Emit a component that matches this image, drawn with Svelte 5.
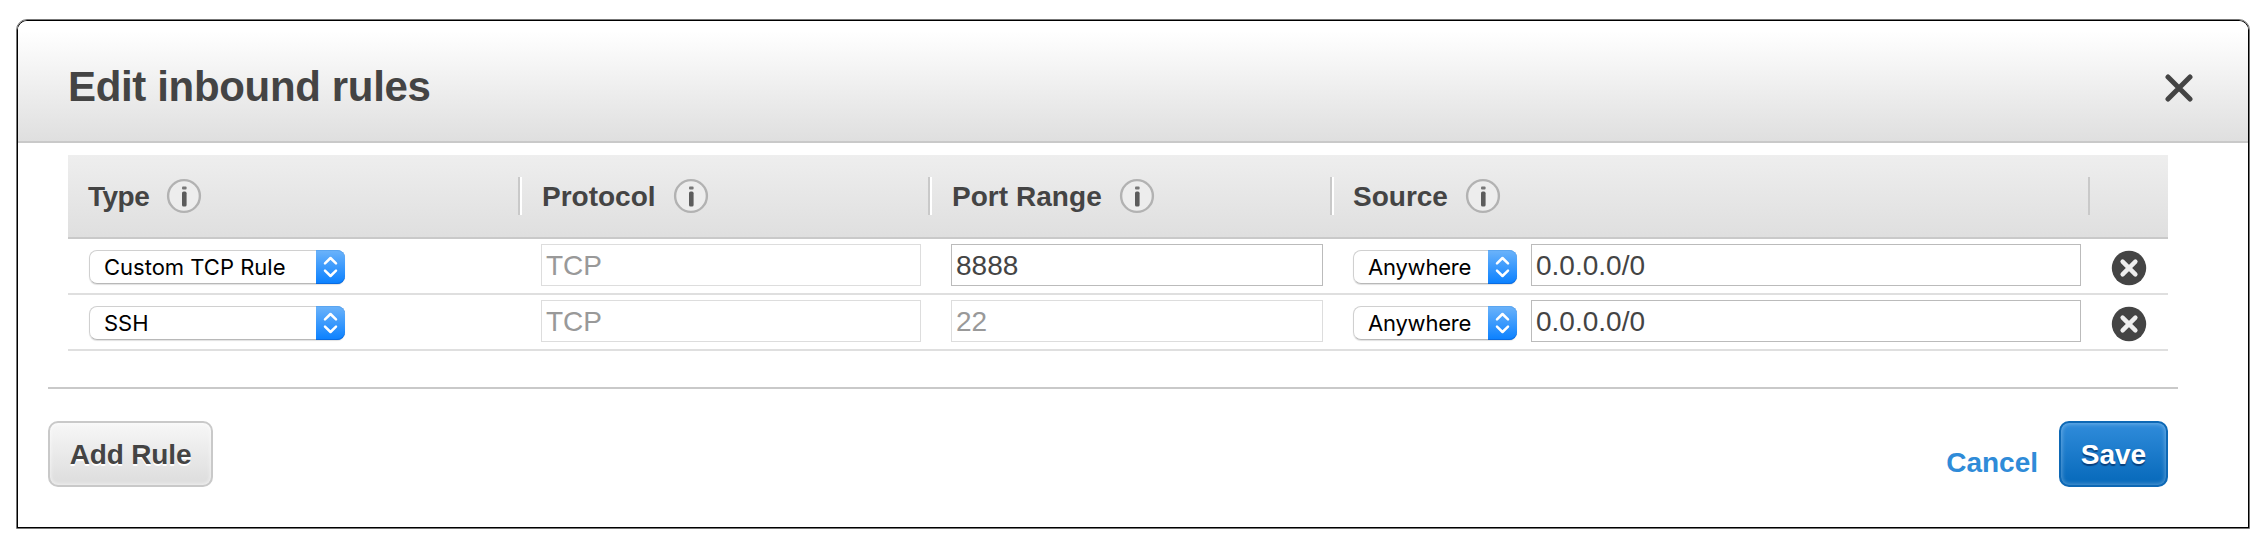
<script>
  const columns = [
    { label: 'Type', spacing: -0.5 },
    { label: 'Protocol', spacing: 0 },
    { label: 'Port Range', spacing: 0.04 },
    { label: 'Source', spacing: 0 }
  ];
  const rules = [
    { type: 'Custom TCP Rule', protocol: 'TCP', port: '8888', portLocked: false, source: 'Anywhere', cidr: '0.0.0.0/0' },
    { type: 'SSH', protocol: 'TCP', port: '22', portLocked: true, source: 'Anywhere', cidr: '0.0.0.0/0' }
  ];
</script>

{#snippet select(value)}
  <div class="select">
    <span class="value">{value}</span>
    <span class="stepper">
      <svg width="29" height="34" viewBox="0 0 29 34">
        <path d="M9 13.4 L14.5 8 L20 13.4 M9 20.6 L14.5 26 L20 20.6" fill="none" stroke="#fff" stroke-width="2.5" stroke-linecap="round" stroke-linejoin="round" />
      </svg>
    </span>
  </div>
{/snippet}

<div class="dialog">
  <header>
    <h1>Edit inbound rules</h1>
    <svg class="close" width="28" height="28" viewBox="0 0 28 28">
      <path d="M3 3 L25 25 M25 3 L3 25" stroke="#444" stroke-width="5" stroke-linecap="round" />
    </svg>
  </header>

  <section class="table">
    <div class="grid head">
      {#each columns as column}
        <div class="th">
          <span class="label" style="letter-spacing: {column.spacing}px">{column.label}</span>
          <svg width="36" height="36" viewBox="0 0 36 36">
            <circle cx="18" cy="18" r="15.9" fill="#ededed" stroke="#b2b2b2" stroke-width="2.4" />
            <rect x="16" y="8.4" width="4.6" height="3.2" rx="1" fill="#777" />
            <rect x="16" y="13.6" width="4.6" height="15" rx="1.6" fill="#5c5c5c" />
          </svg>
        </div>
      {/each}
      <div class="th last"></div>
    </div>

    {#each rules as rule}
      <div class="grid row">
        <div class="td type">{@render select(rule.type)}</div>
        <div class="td"><div class="field locked">{rule.protocol}</div></div>
        <div class="td"><div class="field" class:locked={rule.portLocked}>{rule.port}</div></div>
        <div class="td source">
          {@render select(rule.source)}
          <div class="field">{rule.cidr}</div>
        </div>
        <div class="td remove">
          <svg width="36" height="36" viewBox="0 0 36 36">
            <circle cx="18" cy="18" r="17.2" fill="#444" />
            <path d="M11.6 11.6 L24.4 24.4 M24.4 11.6 L11.6 24.4" stroke="#eee" stroke-width="4.4" stroke-linecap="round" />
          </svg>
        </div>
      </div>
    {/each}
  </section>

  <footer>
    <button class="add">Add Rule</button>
    <div class="actions">
      <a class="cancel" href="#cancel">Cancel</a>
      <button class="save">Save</button>
    </div>
  </footer>
</div>

<style>
  :global(body) {
    background: #fff;
  }
  :global(#app) {
    display: flow-root;
  }
  .dialog {
    box-sizing: border-box;
    width: 2234px;
    height: 510px;
    margin: 19px 0 0 16px;
    border: 1px solid #777;
    border-radius: 11px 11px 0 0;
    box-shadow: inset 0 0 0 1px #000;
    padding: 1px;
    background: #fff;
    color: #444;
    font: 28px/32px "Liberation Sans", Arial, sans-serif;
  }
  header {
    box-sizing: border-box;
    height: 122px;
    display: flex;
    align-items: center;
    justify-content: space-between;
    padding: 0 55px 0 50px;
    border-bottom: 2px solid #c9c9c9;
    border-radius: 9px 9px 0 0;
    background: linear-gradient(#fff 8%, #dfdfdf);
  }
  h1 {
    margin: 12px 0 0;
    font-size: 42px;
    line-height: 48px;
    font-weight: bold;
    letter-spacing: -0.34px;
    white-space: nowrap;
  }
  .close {
    margin-top: 13px;
  }
  .table {
    width: 2100px;
    margin: 12px 0 0 50px;
  }
  .grid {
    display: grid;
    grid-template-columns: 452px 410px 402px 758px 78px;
  }
  .head {
    height: 82px;
    align-items: center;
    border-bottom: 2px solid #c9c9c9;
    background: linear-gradient(#eee, #dfdfdf);
  }
  .th {
    box-sizing: border-box;
    height: 38px;
    display: flex;
    align-items: center;
    gap: 17px;
    padding-left: 20px;
    border-right: 2px solid #c9c9c9;
    font-weight: bold;
  }
  .th + .th {
    padding-left: 20px;
    border-left: 2px solid #fff;
  }
  .th:nth-child(4) {
    padding-left: 19px;
  }
  .th.last {
    border: 0;
  }
  .th .label {
    padding-top: 2px;
  }
  .row {
    height: 54px;
    border-bottom: 2px solid #dfdfdf;
  }
  .td {
    display: flex;
    align-items: flex-start;
    padding: 5px 9px 0 21px;
  }
  .td.source {
    gap: 14px;
  }
  .td.remove {
    justify-content: center;
    padding: 11px 0 0;
  }
  .field {
    box-sizing: border-box;
    flex: 1;
    height: 42px;
    padding: 5px 4px 0;
    border: 1px solid #bbb;
  }
  .field.locked {
    border-color: #ddd;
    color: #999;
  }
  .select {
    box-sizing: border-box;
    width: 164px;
    height: 34px;
    margin-top: 6px;
    display: flex;
    justify-content: space-between;
    border: 1px solid #d0d0d0;
    border-bottom-color: #b8b8b8;
    border-radius: 8px;
    box-shadow: 0 1px 1px rgba(0, 0, 0, 0.12);
    color: #000;
    font: 22px/32px Inter, sans-serif;
    letter-spacing: -0.2px;
    white-space: nowrap;
  }
  .type .select {
    width: 256px;
    letter-spacing: 0;
  }
  .select .value {
    padding-left: 14px;
  }
  .stepper {
    width: 29px;
    height: 34px;
    margin: -1px -1px 0 0;
    border-radius: 0 8px 8px 0;
    background: linear-gradient(#6cb3fa, #0a80ff);
    box-shadow: inset 0 -1px 0 #0a6be0, inset 0 1px 0 #5aa5f0;
  }
  svg {
    display: block;
    flex: none;
  }
  footer {
    width: 2130px;
    box-sizing: border-box;
    display: flex;
    justify-content: space-between;
    margin: 36px 0 0 30px;
    padding: 32px 10px 0 0;
    border-top: 2px solid #c9c9c9;
  }
  .actions {
    display: flex;
    gap: 21px;
  }
  .cancel {
    padding-top: 26px;
    color: #2f8bd8;
    font-weight: bold;
    text-decoration: none;
  }
  button {
    box-sizing: border-box;
    height: 66px;
    padding: 2px 0 0;
    border: 2px solid #c9c9c9;
    border-radius: 10px;
    font: bold 28px/32px "Liberation Sans", Arial, sans-serif;
    white-space: nowrap;
  }
  .add {
    width: 165px;
    color: #444;
    background: linear-gradient(#f7f7f7, #dfdfdf 90%);
    box-shadow: inset 0 0 4px rgba(255, 255, 255, 0.8);
    text-shadow: 0 2px 0 #fff;
    letter-spacing: -0.15px;
  }
  .save {
    width: 109px;
    border-color: #0d68b5;
    color: #fff;
    background: linear-gradient(#308cdb, #0a6cbd 90%);
    box-shadow: inset 0 0 4px 1px rgba(255, 255, 255, 0.3);
    text-shadow: 0 2px 1px rgba(0, 30, 80, 0.6);
  }
</style>
